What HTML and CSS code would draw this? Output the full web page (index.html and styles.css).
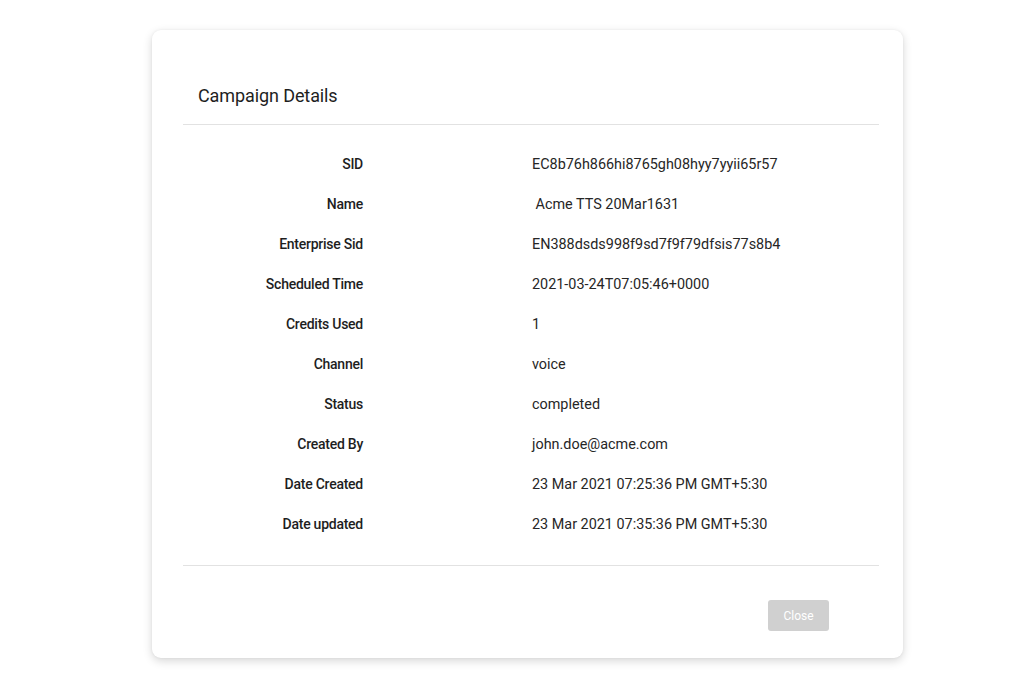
FILE: index.html
```html
<!DOCTYPE html>
<html lang="en">
<head>
<meta charset="utf-8">
<title>Campaign Details</title>
<link rel="stylesheet" href="styles.css">
</head>
<body>
<div class="page">
  <div class="card">
    <div class="card-header">
      <h2 class="title">Campaign Details</h2>
    </div>
    <div class="details">
      <div class="label">SID</div><div class="value">EC8b76h866hi8765gh08hyy7yyii65r57</div>
      <div class="label">Name</div><div class="value">&nbsp;Acme TTS 20Mar1631</div>
      <div class="label">Enterprise Sid</div><div class="value">EN388dsds998f9sd7f9f79dfsis77s8b4</div>
      <div class="label">Scheduled Time</div><div class="value">2021-03-24T07:05:46+0000</div>
      <div class="label">Credits Used</div><div class="value">1</div>
      <div class="label">Channel</div><div class="value">voice</div>
      <div class="label">Status</div><div class="value">completed</div>
      <div class="label">Created By</div><div class="value">john.doe@acme.com</div>
      <div class="label">Date Created</div><div class="value">23 Mar 2021 07:25:36 PM GMT+5:30</div>
      <div class="label">Date updated</div><div class="value">23 Mar 2021 07:35:36 PM GMT+5:30</div>
    </div>
    <div class="card-footer">
      <button class="btn-close" disabled>Close</button>
    </div>
  </div>
</div>
</body>
</html>
```

FILE: styles.css
```css
* { box-sizing: border-box; }
html, body { margin: 0; padding: 0; background: #ffffff; }
body {
  font-family: Roboto, "Liberation Sans", Arial, sans-serif;
  color: #222222;
  width: 1030px;
  height: 693px;
  overflow: hidden;
}
.page {
  padding: 30px 0 0 152px;
}
.card {
  width: 751px;
  height: 628px;
  background: #ffffff;
  border-radius: 9px;
  box-shadow: 0 3px 10px rgba(0, 0, 0, 0.16), 0 0 3px rgba(0, 0, 0, 0.05);
  padding: 0 24px 0 31px;
  display: flex;
  flex-direction: column;
}
.card-header {
  padding: 55px 0 0 15px;
  height: 95px;
  border-bottom: 1px solid #e2e2e2;
}
.title {
  margin: 0;
  font-size: 18px;
  font-weight: 400;
  line-height: 21px;
  color: #1e1e1e;
  letter-spacing: -0.1px;
}
.details {
  display: grid;
  grid-template-columns: 180px 1fr;
  column-gap: 169px;
  grid-auto-rows: 40px;
  padding: 19px 0 21px;
  border-bottom: 1px solid #e2e2e2;
}
.label, .value {
  white-space: nowrap;
}
.label {
  text-align: right;
  font-size: 14px;
  line-height: 40px;
  font-weight: 500;
  letter-spacing: -0.25px;
  color: #1e1e1e;
}
.value {
  font-size: 14.4px;
  line-height: 42px;
  font-weight: 400;
  color: #262626;
}
.card-footer {
  display: flex;
  justify-content: flex-end;
  padding: 34px 50px 0 0;
}
.btn-close {
  width: 61px;
  height: 31px;
  border: none;
  border-radius: 3px;
  background: #d0d0d0;
  color: #ffffff;
  font-family: Roboto, "Liberation Sans", Arial, sans-serif;
  font-size: 12px;
  padding: 0;
}
```
